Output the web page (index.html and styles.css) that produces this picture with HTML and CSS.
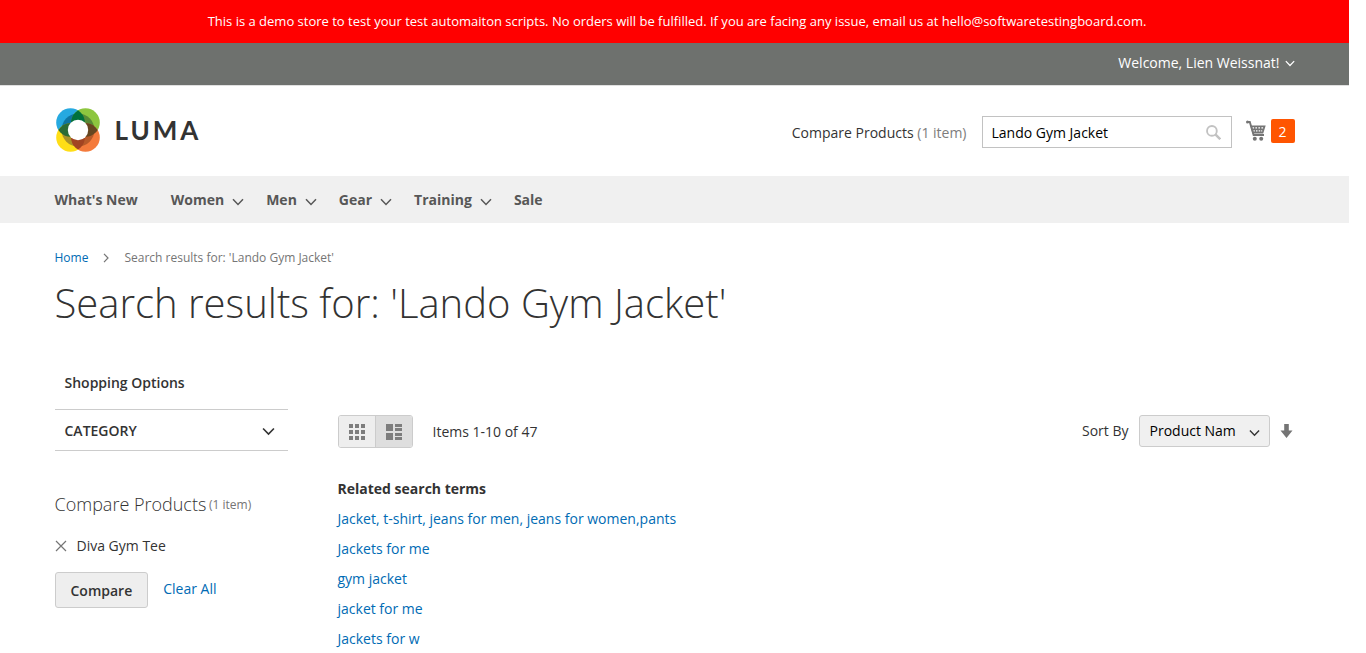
FILE: index.html
```html
<!DOCTYPE html>
<html lang="en">
<head>
<meta charset="utf-8">
<meta name="viewport" content="width=device-width, initial-scale=1">
<title>Search results for: 'Lando Gym Jacket'</title>
<link rel="stylesheet" href="styles.css">
</head>
<body>
<svg class="sprite" aria-hidden="true">
  <symbol id="chevron" viewBox="0 0 12 8"><path d="M1 1.2 6 6.4l5-5.2" fill="none" stroke="currentColor" stroke-width="1.5"/></symbol>
</svg>
<p class="demo-notice">This is a demo store to test your test automaiton scripts. No orders will be fulfilled. If you are facing any issue, email us at hello@softwaretestingboard.com.</p>
<header>
  <div class="panel">
    <div class="container panel-inner">
      <button class="account" type="button">Welcome, Lien Weissnat!<svg class="account-arrow"><use href="#chevron"/></svg></button>
    </div>
  </div>
  <div class="container header-main">
    <a class="logo" href="#" aria-label="Luma store">
      <svg class="logo-mark" viewBox="0 0 44 44" aria-hidden="true">
        <circle cx="14.5" cy="14.5" r="14.3" fill="#26a9e0"/>
        <circle cx="29.5" cy="14.5" r="14.3" fill="#8dc63f"/>
        <circle cx="14.5" cy="29.5" r="14.3" fill="#ffde17"/>
        <circle cx="29.5" cy="29.5" r="14.3" fill="#f47b3c"/>
        <clipPath id="blue"><circle cx="14.5" cy="14.5" r="14.3"/></clipPath>
        <clipPath id="green"><circle cx="29.5" cy="14.5" r="14.3"/></clipPath>
        <clipPath id="yellow"><circle cx="14.5" cy="29.5" r="14.3"/></clipPath>
        <clipPath id="orange"><circle cx="29.5" cy="29.5" r="14.3"/></clipPath>
        <circle cx="22" cy="22" r="16.5" fill="#0e75a1" clip-path="url(#blue)"/>
        <circle cx="22" cy="22" r="16.5" fill="#588a36" clip-path="url(#green)"/>
        <circle cx="22" cy="22" r="16.5" fill="#a8922c" clip-path="url(#yellow)"/>
        <circle cx="22" cy="22" r="16.5" fill="#b75a29" clip-path="url(#orange)"/>
        <g clip-path="url(#blue)"><circle cx="29.5" cy="14.5" r="14.3" fill="#00713b"/><circle cx="14.5" cy="29.5" r="14.3" fill="#2b6b35"/></g>
        <g clip-path="url(#orange)"><circle cx="29.5" cy="14.5" r="14.3" fill="#664620"/><circle cx="14.5" cy="29.5" r="14.3" fill="#a34422"/></g>
        <circle cx="22" cy="22" r="10.2" fill="#fff"/>
      </svg>
      <span class="logo-name">LUMA</span>
    </a>
    <a class="compare-link" href="#">Compare Products <span class="muted">(1 item)</span></a>
    <form class="search">
      <input class="search-input" type="text" aria-label="Search" value="Lando Gym Jacket">
      <button class="search-button" type="button" aria-label="Search">
        <svg class="search-icon" viewBox="0 0 16 16"><circle cx="6.3" cy="6.3" r="5.2" fill="none" stroke="currentColor" stroke-width="2"/><path d="m10 10 5.2 5.2" stroke="currentColor" stroke-width="2.6"/></svg>
      </button>
    </form>
    <a class="cart" href="#" aria-label="My cart">
      <svg class="cart-icon" viewBox="0 0 20 22" aria-hidden="true">
        <path d="M1.2 2h2.6l3.8 13H18" fill="none" stroke="currentColor" stroke-width="1.9"/>
        <circle cx="1.5" cy="2" r="1.5"/>
        <path fill-rule="evenodd" d="M4.3 5.5h15.4L17.2 13.5H6.5zM6.4 7.2v1.2h1.7V7.2zm3 0v1.2H11V7.2zm3 0v1.2H14V7.2zm3 0v1.2h1.7V7.2zM7.3 10.2v1.2h1.5v-1.2zm2.7 0v1.2h1.5v-1.2zm2.7 0v1.2h1.5v-1.2zm2.5 0v1.2h1v-1.2z"/>
        <circle cx="8.8" cy="18.7" r="2"/><circle cx="15.2" cy="18.7" r="2"/>
      </svg>
      <span class="cart-count">2</span>
    </a>
  </div>
  <nav class="nav">
    <div class="container nav-inner">
      <a class="nav-link nav-first" href="#">What's New</a>
      <a class="nav-link" href="#">Women<svg class="nav-arrow"><use href="#chevron"/></svg></a>
      <a class="nav-link" href="#">Men<svg class="nav-arrow"><use href="#chevron"/></svg></a>
      <a class="nav-link" href="#">Gear<svg class="nav-arrow"><use href="#chevron"/></svg></a>
      <a class="nav-link" href="#">Training<svg class="nav-arrow"><use href="#chevron"/></svg></a>
      <a class="nav-link" href="#">Sale</a>
    </div>
  </nav>
</header>
<div class="container">
  <div class="breadcrumbs">
    <a class="link" href="#">Home</a>
    <svg class="crumb-arrow" viewBox="0 0 6 10"><path d="m1 .8 4 4.2-4 4.2" fill="none" stroke="currentColor" stroke-width="1.2"/></svg>
    <span>Search results for: 'Lando Gym Jacket'</span>
  </div>
  <h1 class="page-title">Search results for: 'Lando Gym Jacket'</h1>
  <div class="columns">
    <aside class="sidebar">
      <h2 class="filter-title">Shopping Options</h2>
      <button class="filter" type="button">CATEGORY<svg class="filter-arrow"><use href="#chevron"/></svg></button>
      <section>
        <h2 class="compare-title">Compare Products <span class="compare-count">(1 item)</span></h2>
        <div class="compare-item">
          <button class="remove" type="button" aria-label="Remove Diva Gym Tee"><svg class="remove-icon" viewBox="0 0 12 12"><path d="m1 1 10 10M11 1 1 11" stroke="currentColor" stroke-width="1.2"/></svg></button>
          <a href="#">Diva Gym Tee</a>
        </div>
        <div class="compare-actions">
          <button class="compare-button" type="button">Compare</button>
          <a class="link clear" href="#">Clear All</a>
        </div>
      </section>
    </aside>
    <main class="results">
      <div class="toolbar">
        <div class="modes">
          <button class="mode" type="button" aria-label="Grid">
            <svg class="mode-icon" viewBox="0 0 16 16"><path d="M0 0h4v4H0zM6 0h4v4H6zM12 0h4v4h-4zM0 6h4v4H0zM6 6h4v4H6zM12 6h4v4h-4zM0 12h4v4H0zM6 12h4v4H6zM12 12h4v4h-4z"/></svg>
          </button>
          <button class="mode mode-active" type="button" aria-label="List" aria-pressed="true">
            <svg class="mode-icon" viewBox="0 0 16 16"><path d="M0 0h7v7H0zM9 0h7v3H9zM9 4h7v3H9zM0 9h7v7H0zM9 9h7v3H9zM9 13h7v3H9z"/></svg>
          </button>
        </div>
        <span class="amount">Items 1-10 of 47</span>
        <div class="sorter">
          <label class="sort-label" for="sort">Sort By</label>
          <div class="select-wrap">
            <select class="sort" id="sort"><option>Product Name</option></select>
            <svg class="select-arrow"><use href="#chevron"/></svg>
          </div>
          <button class="direction" type="button" aria-label="Set descending direction"><svg class="direction-icon" viewBox="0 0 12 14"><path d="M3.7 0h4.6v6.5H12L6 14 0 6.500h3.700z"/></svg></button>
        </div>
      </div>
      <h2 class="related-title">Related search terms</h2>
      <ul class="related">
        <li><a class="link" href="#">Jacket, t-shirt, jeans for men, jeans for women,pants</a></li>
        <li><a class="link" href="#">Jackets for me</a></li>
        <li><a class="link" href="#">gym jacket</a></li>
        <li><a class="link" href="#">jacket for me</a></li>
        <li><a class="link" href="#">Jackets for w</a></li>
      </ul>
    </main>
  </div>
</div>
</body>
</html>
```
FILE: styles.css
```css
* { box-sizing: border-box; }
body {
  margin: 0;
  padding-right: 17px;
  background: #fff;
  color: #333;
  font: 14px/20px "Open Sans", "Noto Sans", sans-serif;
  overflow: hidden;
}
h1, h2, p, ul { margin: 0; padding: 0; }
a { color: inherit; text-decoration: none; }
button, input, select { margin: 0; font: inherit; color: inherit; }
button { padding: 0; border: 0; background: none; cursor: pointer; }
svg { display: block; flex: none; }
.sprite { position: absolute; width: 0; height: 0; }
.link { color: #006bb4; }
.muted { color: #7d7d7d; }
.container { max-width: 1280px; margin: 0 auto; padding: 0 20px; }

.demo-notice {
  padding: 11px 20px 12px 25px;
  background: #f00;
  color: #fff;
  font-size: 13px;
  text-align: center;
}
.panel { background: #6e716e; color: #fff; border-bottom: 1px solid #e0e0e0; }
.panel-inner { display: flex; justify-content: flex-end; padding-top: 10px; padding-bottom: 12px; }
.account { display: flex; align-items: center; gap: 5px; }
.account-arrow { width: 10px; height: 7px; }

.header-main { display: flex; align-items: center; height: 90px; }
.logo { display: flex; align-items: center; gap: 15px; margin-right: auto; padding: 0 0 3px 1px; }
.logo-mark { width: 44px; height: 44px; }
.logo-name { font: 700 26px/32px Lato, sans-serif; letter-spacing: 3px; }
.compare-link { margin: 4px 15px 0 0; }
.search { display: flex; width: 250px; height: 32px; margin: 2px 14px 0 0; border: 1px solid #c2c2c2; }
.search-input { flex: 1; min-width: 0; padding: 2px 0 0 9px; border: 0; outline: 0; background: none; color: #000; }
.search-button { padding: 0 10px; color: #c2c2c2; }
.search-icon { width: 15px; height: 15px; }
.cart { display: flex; align-items: center; gap: 5px; color: #757575; }
.cart-icon { width: 20px; height: 22px; fill: currentColor; }
.cart-count { width: 24px; height: 24px; border-radius: 2px; background: #ff5501; color: #fff; line-height: 26px; text-align: center; }

.nav { background: #f0f0f0; }
.nav-inner { display: flex; gap: 22px; }
.nav-link { display: flex; align-items: center; gap: 8px; color: #575757; font-weight: 700; line-height: 47px; }
.nav-first { margin-right: 11px; }
.nav-arrow { width: 12px; height: 8px; margin-top: 4px; }

.breadcrumbs { display: flex; align-items: center; gap: 15px; padding-top: 26px; color: #757575; font-size: 12px; line-height: 18px; }
.crumb-arrow { width: 6px; height: 10px; }
.page-title { padding-top: 14px; font-size: 40px; font-weight: 300; line-height: 44px; }

.columns { display: flex; gap: 50px; padding-top: 48px; }
.sidebar { flex: 0 0 233px; }
.filter-title { padding: 0 10px 16px; font-size: 14px; font-weight: 600; line-height: 20px; }
.filter {
  display: flex;
  align-items: center;
  justify-content: space-between;
  width: 100%;
  height: 42px;
  padding: 2px 13px 0 10px;
  border: 1px solid #ccc;
  border-width: 1px 0;
  font-weight: 600;
}
.filter-arrow { width: 13px; height: 9px; }
.compare-title { padding-top: 41px; font-size: 18px; font-weight: 300; line-height: 24px; }
.compare-count { color: #757575; font-size: 12px; font-weight: 400; vertical-align: 2px; margin-left: -2px; }
.compare-item { display: flex; align-items: center; gap: 10px; padding: 19px 0 16px; }
.remove { color: #757575; }
.remove-icon { width: 12px; height: 12px; }
.compare-actions { display: flex; align-items: center; gap: 15px; }
.compare-button {
  padding: 8px 15px 6px;
  border: 1px solid #ccc;
  border-radius: 3px;
  background: #eee;
  font-weight: 600;
}
.clear { padding-bottom: 2px; }

.results { flex: 1; min-width: 0; padding-top: 42px; }
.toolbar { display: flex; align-items: center; }
.modes { display: flex; border: 1px solid #ccc; border-radius: 3px; overflow: hidden; }
.mode { display: grid; place-items: center; width: 36px; height: 31px; background: #eee; color: #7d7d7d; }
.mode-active { width: 37px; border-left: 1px solid #ccc; background: #dedede; }
.mode-icon { width: 16px; height: 16px; fill: currentColor; }
.amount { margin: 0 auto 0 20px; }
.sorter { display: flex; align-items: center; align-self: flex-start; }
.sort-label { margin-right: 10px; }
.select-wrap { position: relative; }
.sort {
  appearance: none;
  width: 131px;
  height: 32px;
  padding: 0 33px 0 10px;
  border: 1px solid #ccc;
  border-radius: 3px;
  background: #f0f0f0;
  color: #000;
}
.select-arrow { position: absolute; top: 14px; right: 10px; width: 11px; height: 8px; pointer-events: none; }
.direction { margin: 0 2px 0 10px; }
.direction-icon { width: 13px; height: 14px; fill: #757575; }
.related-title { padding-top: 31px; font-size: 14px; font-weight: 700; line-height: 20px; }
.related { list-style: none; line-height: 20px; }
.related li { padding-top: 10px; }
```
